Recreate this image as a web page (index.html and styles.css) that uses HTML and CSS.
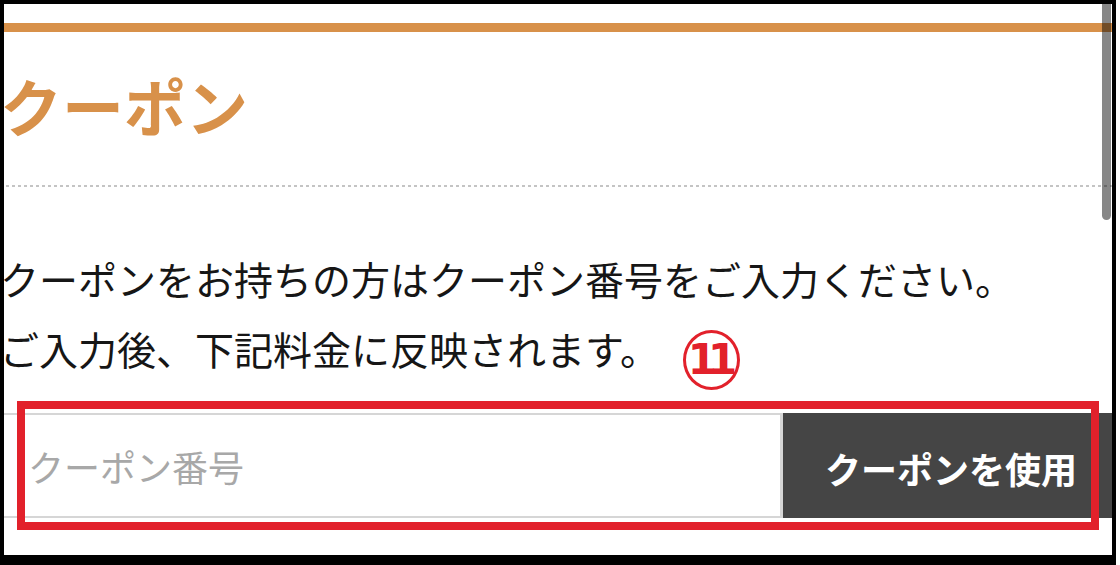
FILE: index.html
```html
<!DOCTYPE html>
<html lang="ja">
<head>
<meta charset="utf-8">
<title>クーポン</title>
<link rel="stylesheet" href="styles.css">
</head>
<body>
<div class="frame">
  <div class="screen">
    <div class="topbar"></div>
    <div class="content">
      <h2 class="title">クーポン</h2>
      <div class="dots"></div>
      <p class="lead">クーポンをお持ちの方はクーポン番号をご入力ください。<br>ご入力後、下記料金に反映されます。</p>
      <div class="coupon-row">
        <input class="coupon-input" type="text" placeholder="クーポン番号">
        <button class="coupon-btn" type="button">クーポンを使用</button>
      </div>
    </div>
    <div class="scrollbar"></div>
  </div>
  <div class="mark-box"></div>
  <span class="mark-num">11</span>
</div>
</body>
</html>
```

FILE: styles.css
```css
html, body {
  margin: 0;
  padding: 0;
  background: #fff;
}
body {
  font-family: "Noto Sans CJK JP", "Noto Sans", sans-serif;
}
.frame {
  position: relative;
  width: 1116px;
  height: 565px;
  box-sizing: border-box;
  border-style: solid;
  border-color: #000;
  border-width: 4px 4px 10px 4px;
  background: #fff;
}
.screen {
  position: relative;
  width: 100%;
  height: 100%;
  overflow: hidden;
  background: #fff;
}
.topbar {
  margin-top: 19px;
  height: 9px;
  background: #d8914a;
}
.content {
  margin-left: -4px;
}
.title {
  margin: 42px 0 0 0;
  font-size: 62px;
  line-height: 62px;
  font-weight: 700;
  color: #d8914a;
  white-space: nowrap;
}
.dots {
  margin-top: 49px;
  margin-left: 6px;
  height: 2px;
  background: repeating-linear-gradient(to right, #c4c4c4 0 3px, transparent 3px 6px);
}
.lead {
  margin: 56px 0 0 0;
  font-size: 39px;
  line-height: 70px;
  color: #161616;
  white-space: nowrap;
}
.coupon-row {
  display: flex;
  margin: 30px 0 0 -10px;
  height: 105px;
  width: 1130px;
}
.coupon-input {
  box-sizing: border-box;
  width: 793px;
  height: 105px;
  margin: 0;
  border: 2px solid #d6d6d6;
  border-right-width: 3px;
  padding: 0 0 0 36px;
  font-family: "Noto Sans CJK JP", sans-serif;
  font-size: 36px;
  color: #333;
  background: #fff;
  outline: none;
}
.coupon-input::placeholder {
  color: #a8a8a8;
}
.coupon-btn {
  box-sizing: border-box;
  width: 336px;
  height: 105px;
  margin: 0;
  border: 0;
  padding: 4px 0 0 0;
  background: #454545;
  color: #fff;
  font-family: "Noto Sans CJK JP", sans-serif;
  font-size: 36px;
  font-weight: 700;
  text-align: center;
}
.scrollbar {
  position: absolute;
  top: 0;
  left: 1098px;
  width: 9px;
  height: 216px;
  border-radius: 0 0 5px 5px;
  background: rgba(0, 0, 0, 0.47);
}
.mark-box {
  position: absolute;
  left: 13px;
  top: 397px;
  width: 1082px;
  height: 129px;
  box-sizing: border-box;
  border: 8px solid #e2212b;
}
.mark-num {
  position: absolute;
  left: 679px;
  top: 326px;
  width: 57px;
  height: 60px;
  box-sizing: border-box;
  border: 3px solid #e2212b;
  border-radius: 50%;
  color: #e2212b;
  font-family: "DejaVu Sans", sans-serif;
  font-weight: 700;
  font-size: 42px;
  line-height: 54px;
  letter-spacing: -9px;
  text-indent: -7px;
  text-align: center;
}
```
